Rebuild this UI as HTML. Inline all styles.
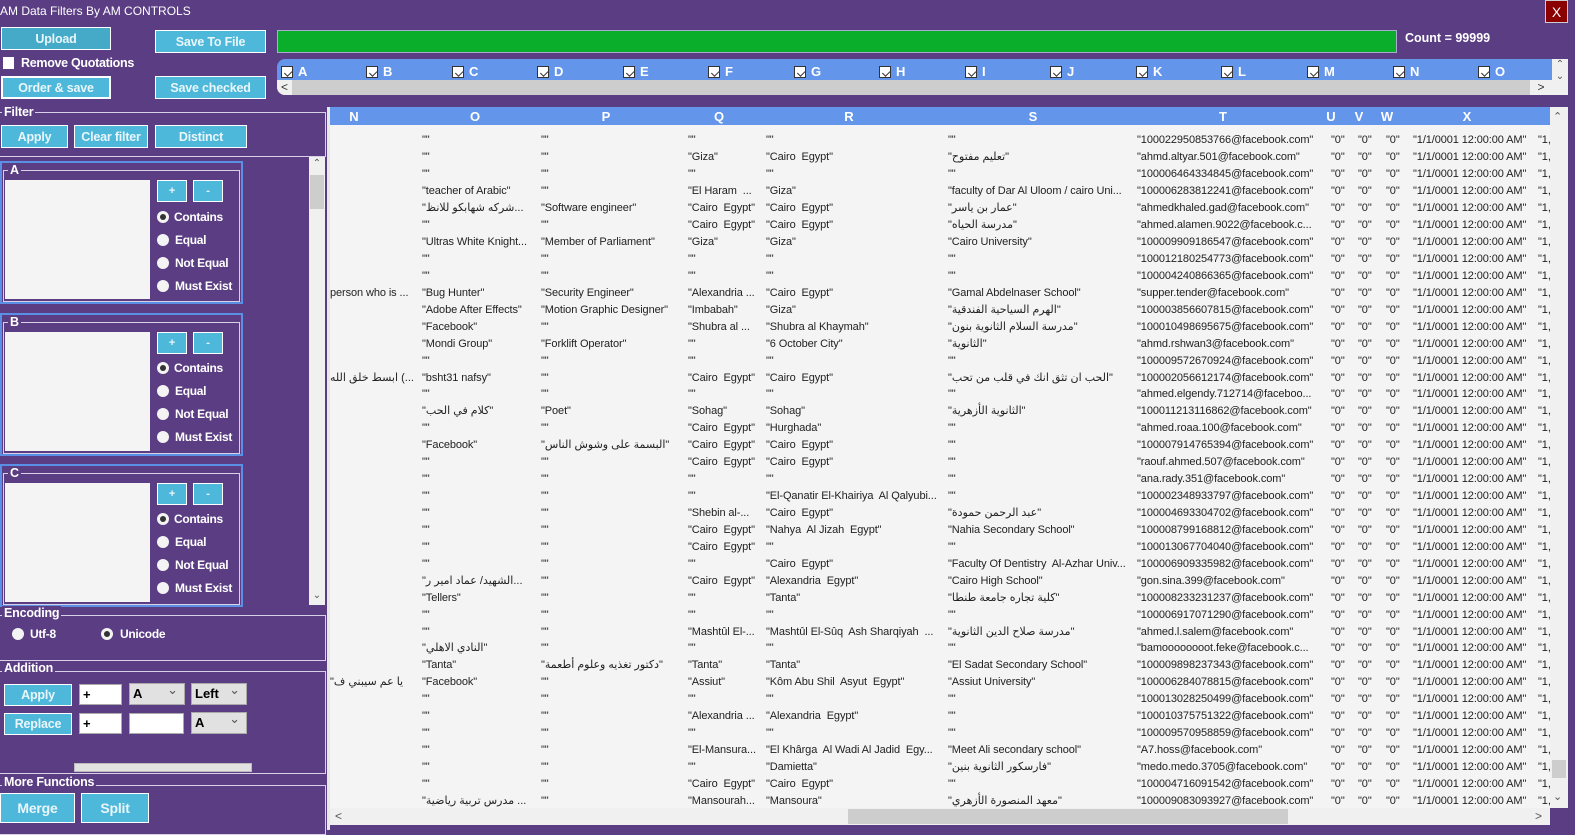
<!DOCTYPE html>
<html><head><meta charset="utf-8"><style>
*{margin:0;padding:0;box-sizing:border-box}
body{width:1575px;height:830px;overflow:hidden;background:#5a3d82;font-family:"Liberation Sans","DejaVu Sans",sans-serif;font-size:12px;color:#fff;position:relative}
.a{position:absolute}
.btn{position:absolute;background:#4db8da;border:1px solid #fff;color:#eaf6fb;font-weight:bold;font-size:12.5px;letter-spacing:-0.2px;text-align:center;display:flex;align-items:center;justify-content:center}
.gb{position:absolute;border:1px solid #d8d0e6}
.gl{position:absolute;background:#5a3d82;color:#fff;font-weight:bold;font-size:12.5px;letter-spacing:-0.2px;padding:0 2px;line-height:14px}
.rad{position:absolute;width:12px;height:12px;border-radius:50%;background:#f4f4f4}
.rad.on::after{content:"";position:absolute;left:3px;top:3px;width:6px;height:6px;border-radius:50%;background:#333}
.rl{position:absolute;font-weight:bold;font-size:12px;letter-spacing:-0.3px;line-height:14px}
.cb{position:absolute;top:66px;width:12px;height:12px;background:#fff;border:1px solid #333}
.cb::after{content:"";position:absolute;left:2px;top:1px;width:6px;height:4px;border-left:1.5px solid #333;border-bottom:1.5px solid #333;transform:rotate(-45deg) translate(-1px,2px)}
.cl{position:absolute;top:64px;font-weight:bold;font-size:13px}
.grid{position:absolute;left:330px;top:107px;width:1220px;height:718px;background:#f4f4f4;overflow:hidden;color:#222}
.hd{position:absolute;top:0;height:18px;left:0;width:1220px;background:#6395ea}
.hd span{position:absolute;top:2px;font-weight:bold;font-size:13px;color:#fff;transform:translateX(-50%)}
.r{position:absolute;left:0;width:1220px;height:17px;white-space:pre;font-size:11px;letter-spacing:-0.1px}
.r span{position:absolute;top:0;line-height:17px}
.n{left:0}.o{left:92px}.p{left:211px}.q{left:358px}.rr{left:436px}.s{left:618px}.t{left:807px}.u{left:1001px}.v{left:1028px}.w{left:1056px}.x{left:1083px}.y{left:1208px}
.in{position:absolute;background:#fff;border:1px solid #aaa;color:#000;font-weight:bold;font-size:13px;padding-left:3px;line-height:20px}
.cmb{position:absolute;background:#e1e1e1;border:1px solid #aaa;color:#000;font-weight:bold;font-size:13px;padding-left:3px;line-height:20px}
.cmb::after{content:"⌄";position:absolute;right:6px;top:-4px;font-weight:normal;color:#555}
</style></head><body>
<div class="a" style="left:0;top:4px;font-size:12px">AM Data Filters By AM CONTROLS</div>
<div class="a" style="left:1545px;top:0;width:23px;height:23px;background:#8b0000;border:1px solid #ccc;text-align:center;line-height:22px;font-size:14px">X</div>

<div class="btn" style="left:1px;top:27px;width:110px;height:23px;background:#44aac8">Upload</div>
<div class="btn" style="left:155px;top:30px;width:111px;height:23px">Save To File</div>
<div class="a" style="left:277px;top:30px;width:1120px;height:23px;background:#0aae2a;border:1px solid #aac"></div>
<div class="a" style="left:1405px;top:31px;font-weight:bold;font-size:12.5px">Count = 99999</div>
<div class="a" style="left:3px;top:57px;width:11px;height:12px;background:#fff"></div>
<div class="a" style="left:21px;top:56px;font-weight:bold;font-size:12.5px;letter-spacing:-0.3px">Remove Quotations</div>
<div class="btn" style="left:1px;top:76px;width:110px;height:23px;border-width:2px">Order &amp; save</div>
<div class="btn" style="left:155px;top:76px;width:111px;height:23px">Save checked</div>

<div class="a" style="left:277px;top:59px;width:1275px;height:21px;background:#6395ea;border-radius:8px 0 0 0"></div>
<div class="a" style="left:277px;top:80px;width:1275px;height:15px;background:#cdcdcd;border-radius:0 0 0 8px"></div>
<div class="a" style="left:277px;top:80px;width:15px;height:15px;background:#f0f0f0;color:#333;font-size:12px;text-align:center;line-height:15px;border-radius:0 0 0 8px">&lt;</div>
<div class="a" style="left:1530px;top:80px;width:22px;height:15px;background:#f0f0f0;color:#333;font-size:12px;text-align:center;line-height:15px">&gt;</div>
<div class="a" style="left:1552px;top:59px;width:16px;height:36px;background:#f0f0f0;color:#555;font-size:10px;text-align:center;line-height:12px">⌃<br>⌄</div>
<div class="cb" style="left:281px"></div><div class="cl" style="left:298px">A</div>
<div class="cb" style="left:366px"></div><div class="cl" style="left:383px">B</div>
<div class="cb" style="left:452px"></div><div class="cl" style="left:469px">C</div>
<div class="cb" style="left:537px"></div><div class="cl" style="left:554px">D</div>
<div class="cb" style="left:623px"></div><div class="cl" style="left:640px">E</div>
<div class="cb" style="left:708px"></div><div class="cl" style="left:725px">F</div>
<div class="cb" style="left:794px"></div><div class="cl" style="left:811px">G</div>
<div class="cb" style="left:879px"></div><div class="cl" style="left:896px">H</div>
<div class="cb" style="left:965px"></div><div class="cl" style="left:982px">I</div>
<div class="cb" style="left:1050px"></div><div class="cl" style="left:1067px">J</div>
<div class="cb" style="left:1136px"></div><div class="cl" style="left:1153px">K</div>
<div class="cb" style="left:1221px"></div><div class="cl" style="left:1238px">L</div>
<div class="cb" style="left:1307px"></div><div class="cl" style="left:1324px">M</div>
<div class="cb" style="left:1393px"></div><div class="cl" style="left:1410px">N</div>
<div class="cb" style="left:1478px"></div><div class="cl" style="left:1495px">O</div>

<div class="gb" style="left:-2px;top:112px;width:328px;height:45px"></div>
<div class="gl" style="left:2px;top:105px">Filter</div>
<div class="btn" style="left:1px;top:125px;width:67px;height:23px">Apply</div>
<div class="btn" style="left:74px;top:125px;width:74px;height:23px">Clear filter</div>
<div class="btn" style="left:155px;top:125px;width:92px;height:23px">Distinct</div>

<div class="a" style="left:309px;top:157px;width:16px;height:448px;background:#f0f0f0"></div>
<div class="a" style="left:310px;top:175px;width:14px;height:34px;background:#cdcdcd"></div>
<div class="a" style="left:310px;top:158px;width:14px;color:#555;text-align:center;font-size:10px">⌃</div>
<div class="a" style="left:310px;top:590px;width:14px;color:#555;text-align:center;font-size:10px">⌄</div>

<div class="a" style="left:0;top:161px;width:243px;height:143px;border:2px solid #5b8fe6"></div>
<div class="gb" style="left:3px;top:170px;width:237px;height:132px"></div>
<div class="gl" style="left:8px;top:163px">A</div>
<div class="a" style="left:5px;top:180px;width:145px;height:119px;background:#f4f4f4"></div>
<div class="btn" style="left:157px;top:180px;width:30px;height:22px;font-size:11px">+</div>
<div class="btn" style="left:193px;top:180px;width:30px;height:22px;font-size:11px">-</div>
<div class="rad on" style="left:157px;top:211px"></div><div class="rl" style="left:174px;top:210px">Contains</div>
<div class="rad" style="left:157px;top:234px"></div><div class="rl" style="left:175px;top:233px">Equal</div>
<div class="rad" style="left:157px;top:257px"></div><div class="rl" style="left:175px;top:256px">Not Equal</div>
<div class="rad" style="left:157px;top:280px"></div><div class="rl" style="left:175px;top:279px">Must Exist</div>

<div class="a" style="left:0;top:313px;width:243px;height:143px;border:2px solid #5b8fe6"></div>
<div class="gb" style="left:3px;top:322px;width:237px;height:132px"></div>
<div class="gl" style="left:8px;top:315px">B</div>
<div class="a" style="left:5px;top:332px;width:145px;height:119px;background:#f4f4f4"></div>
<div class="btn" style="left:157px;top:332px;width:30px;height:22px;font-size:11px">+</div>
<div class="btn" style="left:193px;top:332px;width:30px;height:22px;font-size:11px">-</div>
<div class="rad on" style="left:157px;top:362px"></div><div class="rl" style="left:174px;top:361px">Contains</div>
<div class="rad" style="left:157px;top:385px"></div><div class="rl" style="left:175px;top:384px">Equal</div>
<div class="rad" style="left:157px;top:408px"></div><div class="rl" style="left:175px;top:407px">Not Equal</div>
<div class="rad" style="left:157px;top:431px"></div><div class="rl" style="left:175px;top:430px">Must Exist</div>

<div class="a" style="left:0;top:464px;width:243px;height:143px;border:2px solid #5b8fe6"></div>
<div class="gb" style="left:3px;top:473px;width:237px;height:132px"></div>
<div class="gl" style="left:8px;top:466px">C</div>
<div class="a" style="left:5px;top:483px;width:145px;height:119px;background:#f4f4f4"></div>
<div class="btn" style="left:157px;top:483px;width:30px;height:22px;font-size:11px">+</div>
<div class="btn" style="left:193px;top:483px;width:30px;height:22px;font-size:11px">-</div>
<div class="rad on" style="left:157px;top:513px"></div><div class="rl" style="left:174px;top:512px">Contains</div>
<div class="rad" style="left:157px;top:536px"></div><div class="rl" style="left:175px;top:535px">Equal</div>
<div class="rad" style="left:157px;top:559px"></div><div class="rl" style="left:175px;top:558px">Not Equal</div>
<div class="rad" style="left:157px;top:582px"></div><div class="rl" style="left:175px;top:581px">Must Exist</div>

<div class="gb" style="left:-2px;top:615px;width:328px;height:46px"></div>
<div class="gl" style="left:2px;top:606px">Encoding</div>
<div class="rad" style="left:12px;top:628px"></div><div class="rl" style="left:30px;top:627px">Utf-8</div>
<div class="rad on" style="left:101px;top:628px"></div><div class="rl" style="left:120px;top:627px">Unicode</div>

<div class="gb" style="left:-2px;top:671px;width:328px;height:103px"></div>
<div class="gl" style="left:2px;top:661px">Addition</div>
<div class="btn" style="left:4px;top:684px;width:68px;height:22px">Apply</div>
<div class="in" style="left:79px;top:684px;width:43px;height:21px">+</div>
<div class="cmb" style="left:129px;top:683px;width:56px;height:22px">A</div>
<div class="cmb" style="left:191px;top:683px;width:56px;height:22px">Left</div>
<div class="btn" style="left:4px;top:713px;width:68px;height:22px">Replace</div>
<div class="in" style="left:79px;top:713px;width:43px;height:21px">+</div>
<div class="in" style="left:129px;top:713px;width:55px;height:21px"></div>
<div class="cmb" style="left:191px;top:712px;width:56px;height:22px">A</div>
<div class="a" style="left:74px;top:763px;width:178px;height:9px;background:#e2e2e2;border:1px solid #bbb"></div>

<div class="gb" style="left:-2px;top:785px;width:328px;height:50px"></div>
<div class="gl" style="left:2px;top:775px">More Functions</div>
<div class="btn" style="left:0;top:793px;width:75px;height:30px;font-size:14px">Merge</div>
<div class="btn" style="left:81px;top:793px;width:68px;height:30px;font-size:14px">Split</div>

<div class="a" style="left:327px;top:107px;width:3px;height:723px;background:#e8e8e8"></div>
<div class="grid">
<div class="hd"><span style="left:24px">N</span><span style="left:145px">O</span><span style="left:276px">P</span><span style="left:389px">Q</span><span style="left:519px">R</span><span style="left:703px">S</span><span style="left:893px">T</span><span style="left:1001px">U</span><span style="left:1029px">V</span><span style="left:1057px">W</span><span style="left:1137px">X</span></div>
</div>
<div class="grid" style="background:transparent;top:132px;height:676px">
<div class="r" style="top:0"><span class="o">""</span><span class="p">""</span><span class="q">""</span><span class="rr">""</span><span class="s">""</span><span class="t">"100022950853766@facebook.com"</span><span class="u">"0"</span><span class="v">"0"</span><span class="w">"0"</span><span class="x">"1/1/0001 12:00:00 AM"</span><span class="y">"1,</span></div>
<div class="r" style="top:17px"><span class="o">""</span><span class="p">""</span><span class="q">"Giza"</span><span class="rr">"Cairo  Egypt"</span><span class="s">"تعليم مفتوح"</span><span class="t">"ahmd.altyar.501@facebook.com"</span><span class="u">"0"</span><span class="v">"0"</span><span class="w">"0"</span><span class="x">"1/1/0001 12:00:00 AM"</span><span class="y">"1,</span></div>
<div class="r" style="top:34px"><span class="o">""</span><span class="p">""</span><span class="q">""</span><span class="rr">""</span><span class="s">""</span><span class="t">"100006464334845@facebook.com"</span><span class="u">"0"</span><span class="v">"0"</span><span class="w">"0"</span><span class="x">"1/1/0001 12:00:00 AM"</span><span class="y">"1,</span></div>
<div class="r" style="top:51px"><span class="o">"teacher of Arabic"</span><span class="p">""</span><span class="q">"El Haram  ...</span><span class="rr">"Giza"</span><span class="s">"faculty of Dar Al Uloom / cairo Uni...</span><span class="t">"100006283812241@facebook.com"</span><span class="u">"0"</span><span class="v">"0"</span><span class="w">"0"</span><span class="x">"1/1/0001 12:00:00 AM"</span><span class="y">"1,</span></div>
<div class="r" style="top:68px"><span class="o">"شركه شهابكو للانظ...</span><span class="p">"Software engineer"</span><span class="q">"Cairo  Egypt"</span><span class="rr">"Cairo  Egypt"</span><span class="s">"عمار بن ياسر"</span><span class="t">"ahmedkhaled.gad@facebook.com"</span><span class="u">"0"</span><span class="v">"0"</span><span class="w">"0"</span><span class="x">"1/1/0001 12:00:00 AM"</span><span class="y">"1,</span></div>
<div class="r" style="top:85px"><span class="o">""</span><span class="p">""</span><span class="q">"Cairo  Egypt"</span><span class="rr">"Cairo  Egypt"</span><span class="s">"مدرسة الحياه"</span><span class="t">"ahmed.alamen.9022@facebook.c...</span><span class="u">"0"</span><span class="v">"0"</span><span class="w">"0"</span><span class="x">"1/1/0001 12:00:00 AM"</span><span class="y">"1,</span></div>
<div class="r" style="top:102px"><span class="o">"Ultras White Knight...</span><span class="p">"Member of Parliament"</span><span class="q">"Giza"</span><span class="rr">"Giza"</span><span class="s">"Cairo University"</span><span class="t">"100009909186547@facebook.com"</span><span class="u">"0"</span><span class="v">"0"</span><span class="w">"0"</span><span class="x">"1/1/0001 12:00:00 AM"</span><span class="y">"1,</span></div>
<div class="r" style="top:119px"><span class="o">""</span><span class="p">""</span><span class="q">""</span><span class="rr">""</span><span class="s">""</span><span class="t">"100012180254773@facebook.com"</span><span class="u">"0"</span><span class="v">"0"</span><span class="w">"0"</span><span class="x">"1/1/0001 12:00:00 AM"</span><span class="y">"1,</span></div>
<div class="r" style="top:136px"><span class="o">""</span><span class="p">""</span><span class="q">""</span><span class="rr">""</span><span class="s">""</span><span class="t">"100004240866365@facebook.com"</span><span class="u">"0"</span><span class="v">"0"</span><span class="w">"0"</span><span class="x">"1/1/0001 12:00:00 AM"</span><span class="y">"1,</span></div>
<div class="r" style="top:153px"><span class="n">person who is ...</span><span class="o">"Bug Hunter"</span><span class="p">"Security Engineer"</span><span class="q">"Alexandria ...</span><span class="rr">"Cairo  Egypt"</span><span class="s">"Gamal Abdelnaser School"</span><span class="t">"supper.tender@facebook.com"</span><span class="u">"0"</span><span class="v">"0"</span><span class="w">"0"</span><span class="x">"1/1/0001 12:00:00 AM"</span><span class="y">"1,</span></div>
<div class="r" style="top:170px"><span class="o">"Adobe After Effects"</span><span class="p">"Motion Graphic Designer"</span><span class="q">"Imbabah"</span><span class="rr">"Giza"</span><span class="s">"الهرم السياحية الفندقية"</span><span class="t">"100003856607815@facebook.com"</span><span class="u">"0"</span><span class="v">"0"</span><span class="w">"0"</span><span class="x">"1/1/0001 12:00:00 AM"</span><span class="y">"1,</span></div>
<div class="r" style="top:187px"><span class="o">"Facebook"</span><span class="p">""</span><span class="q">"Shubra al ...</span><span class="rr">"Shubra al Khaymah"</span><span class="s">"مدرسة السلام الثانوية بنون"</span><span class="t">"100010498695675@facebook.com"</span><span class="u">"0"</span><span class="v">"0"</span><span class="w">"0"</span><span class="x">"1/1/0001 12:00:00 AM"</span><span class="y">"1,</span></div>
<div class="r" style="top:204px"><span class="o">"Mondi Group"</span><span class="p">"Forklift Operator"</span><span class="q">""</span><span class="rr">"6 October City"</span><span class="s">"الثانوية"</span><span class="t">"ahmd.rshwan3@facebook.com"</span><span class="u">"0"</span><span class="v">"0"</span><span class="w">"0"</span><span class="x">"1/1/0001 12:00:00 AM"</span><span class="y">"1,</span></div>
<div class="r" style="top:221px"><span class="o">""</span><span class="p">""</span><span class="q">""</span><span class="rr">""</span><span class="s">""</span><span class="t">"100009572670924@facebook.com"</span><span class="u">"0"</span><span class="v">"0"</span><span class="w">"0"</span><span class="x">"1/1/0001 12:00:00 AM"</span><span class="y">"1,</span></div>
<div class="r" style="top:238px"><span class="n">ابسط خلق الله (...</span><span class="o">"bsht31 nafsy"</span><span class="p">""</span><span class="q">"Cairo  Egypt"</span><span class="rr">"Cairo  Egypt"</span><span class="s">"الحب ان تثق انك في قلب من تحب"</span><span class="t">"100002056612174@facebook.com"</span><span class="u">"0"</span><span class="v">"0"</span><span class="w">"0"</span><span class="x">"1/1/0001 12:00:00 AM"</span><span class="y">"1,</span></div>
<div class="r" style="top:254px"><span class="o">""</span><span class="p">""</span><span class="q">""</span><span class="rr">""</span><span class="s">""</span><span class="t">"ahmed.elgendy.712714@faceboo...</span><span class="u">"0"</span><span class="v">"0"</span><span class="w">"0"</span><span class="x">"1/1/0001 12:00:00 AM"</span><span class="y">"1,</span></div>
<div class="r" style="top:271px"><span class="o">"كلام في الحب"</span><span class="p">"Poet"</span><span class="q">"Sohag"</span><span class="rr">"Sohag"</span><span class="s">"الثانوية الأزهرية"</span><span class="t">"100011213116862@facebook.com"</span><span class="u">"0"</span><span class="v">"0"</span><span class="w">"0"</span><span class="x">"1/1/0001 12:00:00 AM"</span><span class="y">"1,</span></div>
<div class="r" style="top:288px"><span class="o">""</span><span class="p">""</span><span class="q">"Cairo  Egypt"</span><span class="rr">"Hurghada"</span><span class="s">""</span><span class="t">"ahmed.roaa.100@facebook.com"</span><span class="u">"0"</span><span class="v">"0"</span><span class="w">"0"</span><span class="x">"1/1/0001 12:00:00 AM"</span><span class="y">"1,</span></div>
<div class="r" style="top:305px"><span class="o">"Facebook"</span><span class="p">"البسمة على وشوش الناس"</span><span class="q">"Cairo  Egypt"</span><span class="rr">"Cairo  Egypt"</span><span class="s">""</span><span class="t">"100007914765394@facebook.com"</span><span class="u">"0"</span><span class="v">"0"</span><span class="w">"0"</span><span class="x">"1/1/0001 12:00:00 AM"</span><span class="y">"1,</span></div>
<div class="r" style="top:322px"><span class="o">""</span><span class="p">""</span><span class="q">"Cairo  Egypt"</span><span class="rr">"Cairo  Egypt"</span><span class="s">""</span><span class="t">"raouf.ahmed.507@facebook.com"</span><span class="u">"0"</span><span class="v">"0"</span><span class="w">"0"</span><span class="x">"1/1/0001 12:00:00 AM"</span><span class="y">"1,</span></div>
<div class="r" style="top:339px"><span class="o">""</span><span class="p">""</span><span class="q">""</span><span class="rr">""</span><span class="s">""</span><span class="t">"ana.rady.351@facebook.com"</span><span class="u">"0"</span><span class="v">"0"</span><span class="w">"0"</span><span class="x">"1/1/0001 12:00:00 AM"</span><span class="y">"1,</span></div>
<div class="r" style="top:356px"><span class="o">""</span><span class="p">""</span><span class="q">""</span><span class="rr">"El-Qanatir El-Khairiya  Al Qalyubi...</span><span class="s">""</span><span class="t">"100002348933797@facebook.com"</span><span class="u">"0"</span><span class="v">"0"</span><span class="w">"0"</span><span class="x">"1/1/0001 12:00:00 AM"</span><span class="y">"1,</span></div>
<div class="r" style="top:373px"><span class="o">""</span><span class="p">""</span><span class="q">"Shebin al-...</span><span class="rr">"Cairo  Egypt"</span><span class="s">"عبد الرحمن حمودة"</span><span class="t">"100004693304702@facebook.com"</span><span class="u">"0"</span><span class="v">"0"</span><span class="w">"0"</span><span class="x">"1/1/0001 12:00:00 AM"</span><span class="y">"1,</span></div>
<div class="r" style="top:390px"><span class="o">""</span><span class="p">""</span><span class="q">"Cairo  Egypt"</span><span class="rr">"Nahya  Al Jizah  Egypt"</span><span class="s">"Nahia Secondary School"</span><span class="t">"100008799168812@facebook.com"</span><span class="u">"0"</span><span class="v">"0"</span><span class="w">"0"</span><span class="x">"1/1/0001 12:00:00 AM"</span><span class="y">"1,</span></div>
<div class="r" style="top:407px"><span class="o">""</span><span class="p">""</span><span class="q">"Cairo  Egypt"</span><span class="rr">""</span><span class="s">""</span><span class="t">"100013067704040@facebook.com"</span><span class="u">"0"</span><span class="v">"0"</span><span class="w">"0"</span><span class="x">"1/1/0001 12:00:00 AM"</span><span class="y">"1,</span></div>
<div class="r" style="top:424px"><span class="o">""</span><span class="p">""</span><span class="q">""</span><span class="rr">"Cairo  Egypt"</span><span class="s">"Faculty Of Dentistry  Al-Azhar Univ...</span><span class="t">"100006909335982@facebook.com"</span><span class="u">"0"</span><span class="v">"0"</span><span class="w">"0"</span><span class="x">"1/1/0001 12:00:00 AM"</span><span class="y">"1,</span></div>
<div class="r" style="top:441px"><span class="o">"الشهيد/ عماد امير ر...</span><span class="p">""</span><span class="q">"Cairo  Egypt"</span><span class="rr">"Alexandria  Egypt"</span><span class="s">"Cairo High School"</span><span class="t">"gon.sina.399@facebook.com"</span><span class="u">"0"</span><span class="v">"0"</span><span class="w">"0"</span><span class="x">"1/1/0001 12:00:00 AM"</span><span class="y">"1,</span></div>
<div class="r" style="top:458px"><span class="o">"Tellers"</span><span class="p">""</span><span class="q">""</span><span class="rr">"Tanta"</span><span class="s">"كلية تجاره جامعة طنطا"</span><span class="t">"100008233231237@facebook.com"</span><span class="u">"0"</span><span class="v">"0"</span><span class="w">"0"</span><span class="x">"1/1/0001 12:00:00 AM"</span><span class="y">"1,</span></div>
<div class="r" style="top:475px"><span class="o">""</span><span class="p">""</span><span class="q">""</span><span class="rr">""</span><span class="s">""</span><span class="t">"100006917071290@facebook.com"</span><span class="u">"0"</span><span class="v">"0"</span><span class="w">"0"</span><span class="x">"1/1/0001 12:00:00 AM"</span><span class="y">"1,</span></div>
<div class="r" style="top:492px"><span class="o">""</span><span class="p">""</span><span class="q">"Mashtûl El-...</span><span class="rr">"Mashtûl El-Sûq  Ash Sharqiyah  ...</span><span class="s">"مدرسة صلاح الدين الثانوية"</span><span class="t">"ahmed.l.salem@facebook.com"</span><span class="u">"0"</span><span class="v">"0"</span><span class="w">"0"</span><span class="x">"1/1/0001 12:00:00 AM"</span><span class="y">"1,</span></div>
<div class="r" style="top:508px"><span class="o">"النادي الاهلي"</span><span class="p">""</span><span class="q">""</span><span class="rr">""</span><span class="s">""</span><span class="t">"bamoooooooot.feke@facebook.c...</span><span class="u">"0"</span><span class="v">"0"</span><span class="w">"0"</span><span class="x">"1/1/0001 12:00:00 AM"</span><span class="y">"1,</span></div>
<div class="r" style="top:525px"><span class="o">"Tanta"</span><span class="p">"دكتور تغذيه وعلوم أطعمة"</span><span class="q">"Tanta"</span><span class="rr">"Tanta"</span><span class="s">"El Sadat Secondary School"</span><span class="t">"100009898237343@facebook.com"</span><span class="u">"0"</span><span class="v">"0"</span><span class="w">"0"</span><span class="x">"1/1/0001 12:00:00 AM"</span><span class="y">"1,</span></div>
<div class="r" style="top:542px"><span class="n">"يا عم سيبني ف</span><span class="o">"Facebook"</span><span class="p">""</span><span class="q">"Assiut"</span><span class="rr">"Kôm Abu Shil  Asyut  Egypt"</span><span class="s">"Assiut University"</span><span class="t">"100006284078815@facebook.com"</span><span class="u">"0"</span><span class="v">"0"</span><span class="w">"0"</span><span class="x">"1/1/0001 12:00:00 AM"</span><span class="y">"1,</span></div>
<div class="r" style="top:559px"><span class="o">""</span><span class="p">""</span><span class="q">""</span><span class="rr">""</span><span class="s">""</span><span class="t">"100013028250499@facebook.com"</span><span class="u">"0"</span><span class="v">"0"</span><span class="w">"0"</span><span class="x">"1/1/0001 12:00:00 AM"</span><span class="y">"1,</span></div>
<div class="r" style="top:576px"><span class="o">""</span><span class="p">""</span><span class="q">"Alexandria ...</span><span class="rr">"Alexandria  Egypt"</span><span class="s">""</span><span class="t">"100010375751322@facebook.com"</span><span class="u">"0"</span><span class="v">"0"</span><span class="w">"0"</span><span class="x">"1/1/0001 12:00:00 AM"</span><span class="y">"1,</span></div>
<div class="r" style="top:593px"><span class="o">""</span><span class="p">""</span><span class="q">""</span><span class="rr">""</span><span class="s">""</span><span class="t">"100009570958859@facebook.com"</span><span class="u">"0"</span><span class="v">"0"</span><span class="w">"0"</span><span class="x">"1/1/0001 12:00:00 AM"</span><span class="y">"1,</span></div>
<div class="r" style="top:610px"><span class="o">""</span><span class="p">""</span><span class="q">"El-Mansura...</span><span class="rr">"El Khârga  Al Wadi Al Jadid  Egy...</span><span class="s">"Meet Ali secondary school"</span><span class="t">"A7.hoss@facebook.com"</span><span class="u">"0"</span><span class="v">"0"</span><span class="w">"0"</span><span class="x">"1/1/0001 12:00:00 AM"</span><span class="y">"1,</span></div>
<div class="r" style="top:627px"><span class="o">""</span><span class="p">""</span><span class="q">""</span><span class="rr">"Damietta"</span><span class="s">"فارسكور الثانوية بنين"</span><span class="t">"medo.medo.3705@facebook.com"</span><span class="u">"0"</span><span class="v">"0"</span><span class="w">"0"</span><span class="x">"1/1/0001 12:00:00 AM"</span><span class="y">"1,</span></div>
<div class="r" style="top:644px"><span class="o">""</span><span class="p">""</span><span class="q">"Cairo  Egypt"</span><span class="rr">"Cairo  Egypt"</span><span class="s">""</span><span class="t">"100004716091542@facebook.com"</span><span class="u">"0"</span><span class="v">"0"</span><span class="w">"0"</span><span class="x">"1/1/0001 12:00:00 AM"</span><span class="y">"1,</span></div>
<div class="r" style="top:661px"><span class="o">"مدرس تربية رياضية ...</span><span class="p">""</span><span class="q">"Mansourah...</span><span class="rr">"Mansoura"</span><span class="s">"معهد المنصورة الأزهري"</span><span class="t">"100009083093927@facebook.com"</span><span class="u">"0"</span><span class="v">"0"</span><span class="w">"0"</span><span class="x">"1/1/0001 12:00:00 AM"</span><span class="y">"1,</span></div>
</div>
<div class="a" style="left:330px;top:808px;width:1220px;height:17px;background:#f0f0f0;color:#555;font-size:12px;line-height:17px;padding-left:5px">&lt;</div>
<div class="a" style="left:848px;top:809px;width:440px;height:15px;background:#cdcdcd"></div>
<div class="a" style="left:1535px;top:808px;color:#555;line-height:17px">&gt;</div>
<div class="a" style="left:1550px;top:107px;width:18px;height:701px;background:#f0f0f0"></div>
<div class="a" style="left:1552px;top:760px;width:14px;height:18px;background:#cdcdcd"></div>
<div class="a" style="left:1553px;top:110px;color:#555;font-size:11px">⌃</div>
<div class="a" style="left:1553px;top:790px;color:#555;font-size:11px">⌄</div>
</body></html>
